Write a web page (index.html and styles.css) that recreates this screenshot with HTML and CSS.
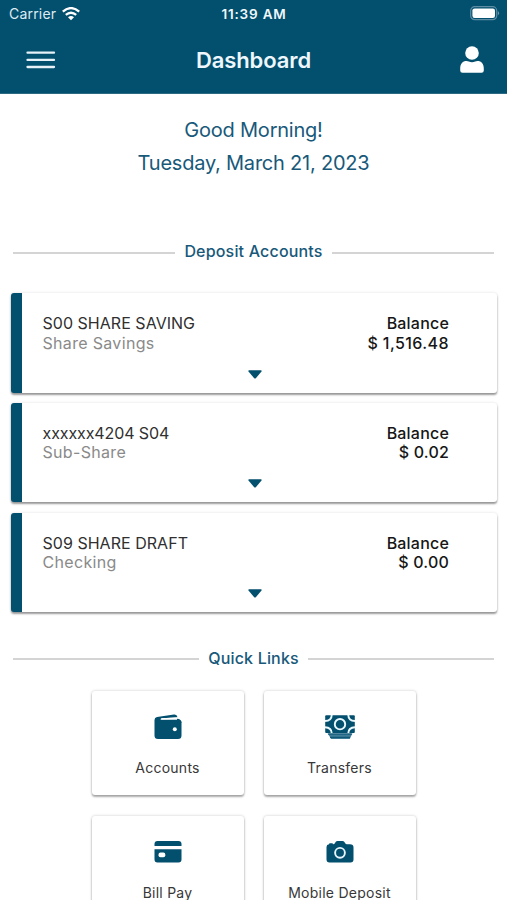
FILE: index.html
```html
<!DOCTYPE html>
<html lang="en">
<head>
<meta charset="utf-8">
<title>Dashboard</title>
<link rel="stylesheet" href="styles.css">
</head>
<body>
<header class="header">
  <div class="status">
    <div class="carrier"><span>Carrier</span>
      <svg class="wifi" viewBox="0 0 18 14"><g fill="none" stroke="#fff" stroke-width="2.300"><path d="M.8 4.600Q9-2.400 17.200 4.600"/><path d="M3.800 7.900Q9 3.500 14.200 7.900"/></g><path fill="#fff" d="M6 10.200Q9 7.900 12 10.200L9 13.300Z"/></svg>
    </div>
    <time class="clock">11:39 AM</time>
    <svg class="battery" viewBox="0 0 31 15"><rect x="1.700" y=".7" width="26" height="13" rx="4" fill="none" stroke="#5d8da4" stroke-width="1.200"/><rect x="3.400" y="2.400" width="22.600" height="9.600" rx="2.200" fill="#fff"/><path d="M28.900 5Q31.200 7.200 28.900 9.400Z" fill="#6f9bb0"/></svg>
  </div>
  <nav class="navbar">
    <svg class="menu" viewBox="0 0 30 20"><path d="M1.500 2.700H28M1.500 9.900H28M1.500 17H28" stroke="#e6f1f8" stroke-width="2.300" stroke-linecap="round"/></svg>
    <h1 class="title">Dashboard</h1>
    <svg class="user" viewBox="0 0 24 28"><circle cx="12" cy="7" r="6.800" fill="#fff"/><path fill="#fff" d="M.2 22.500C.2 17.500 2.800 15 6.500 15C8 15 9.500 16.200 12 16.200S16 15 17.500 15C21.200 15 23.800 17.500 23.800 22.500V24.500Q23.800 26.800 21.500 26.800H2.500Q.2 26.800.2 24.500Z"/></svg>
  </nav>
</header>
<main>
  <section class="greeting">
    <p class="hello">Good Morning!</p>
    <p class="date">Tuesday, March 21, 2023</p>
  </section>
  <h2 class="divider deposit"><span>Deposit Accounts</span></h2>
  <section class="accounts">
    <article class="account">
      <div class="row"><span class="name">S00 SHARE SAVING</span><span class="label">Balance</span></div>
      <div class="row"><span class="kind">Share Savings</span><span class="amount large">$ 1,516.48</span></div>
      <svg class="caret" viewBox="0 0 14 9"><path d="M1.200.3H12.800Q14.300.5 13.300 1.800L8 8Q7 9 6 8L.7 1.800Q-.3.5 1.200.3Z"/></svg>
    </article>
    <article class="account">
      <div class="row"><span class="name masked">xxxxxx4204 S04</span><span class="label">Balance</span></div>
      <div class="row"><span class="kind">Sub-Share</span><span class="amount">$ 0.02</span></div>
      <svg class="caret" viewBox="0 0 14 9"><path d="M1.200.3H12.800Q14.300.5 13.300 1.800L8 8Q7 9 6 8L.7 1.800Q-.3.5 1.200.3Z"/></svg>
    </article>
    <article class="account">
      <div class="row"><span class="name">S09 SHARE DRAFT</span><span class="label">Balance</span></div>
      <div class="row"><span class="kind">Checking</span><span class="amount">$ 0.00</span></div>
      <svg class="caret" viewBox="0 0 14 9"><path d="M1.200.3H12.800Q14.300.5 13.300 1.800L8 8Q7 9 6 8L.7 1.800Q-.3.5 1.200.3Z"/></svg>
    </article>
  </section>
  <h2 class="divider quick"><span>Quick Links</span></h2>
  <section class="links">
    <a class="tile">
      <svg class="icon" viewBox="0 0 30 26"><path d="M1.500 6Q1.500 3.700 4 3.100L21 .6Q24 .2 24.500 3.300L9 4.300Q7.500 4.500 7.500 5.200Q7.500 5.800 9 5.800H25Q28.500 5.800 28.500 9V21.500Q28.500 25 25 25H5Q1.500 25 1.500 21.500Z"/><path d="M8.500 4.900L24.800 4.100" stroke="#fff" stroke-width="1.200"/><path d="M24 4.700Q28.500 4.900 28.500 9H24Z"/><circle cx="21.800" cy="15.200" r="2" fill="#fff"/></svg>
      <span>Accounts</span>
    </a>
    <a class="tile">
      <svg class="icon" viewBox="0 0 30 26"><rect x=".2" y="1.300" width="29.600" height="17.700" rx="1"/><g fill="none" stroke="#eaf8ff" stroke-width="1.900"><circle cx="15" cy="10.200" r="5.200"/><path d="M6.700 1Q6.700 6.700 0 7M23.300 1Q23.300 6.700 30 7M0 13.200Q6.700 13.600 6.700 19.200M30 13.200Q23.300 13.600 23.300 19.200"/></g><path d="M2.500 19.500H27.500L26 22.300L24.800 25H6L4.500 22.300Z" fill="#3f7c98"/><path d="M3.200 20H26.800M5 23.300H25" stroke="#034f6e" stroke-width="1"/></svg>
      <span>Transfers</span>
    </a>
    <a class="tile">
      <svg class="icon" viewBox="0 0 30 26"><path d="M1.500 7V5Q1.500 2 4.500 2H25.500Q28.500 2 28.500 5V7ZM1.500 10.300H28.500V20.500Q28.500 23.500 25.500 23.500H4.500Q1.500 23.500 1.500 20.500Z"/><rect x="5.500" y="13.500" width="6.800" height="4.800" rx="2" fill="#fff"/></svg>
      <span>Bill Pay</span>
    </a>
    <a class="tile">
      <svg class="icon" viewBox="0 0 30 26"><path d="M1.500 8Q1.500 5.500 4 5.300L4.500 4.300H7.500L8 5.200Q9.500 5.200 10 4L10.800 2.800Q11.300 2 12.500 2H17.500Q18.700 2 19.200 2.800L20.200 4.200Q20.800 5.200 22 5.200H25Q28.500 5.200 28.500 8.500V20.500Q28.500 23.500 25.500 23.500H4.500Q1.500 23.500 1.500 20.500Z"/><circle cx="15" cy="13.800" r="4.900" fill="none" stroke="#e7f6ff" stroke-width="1.900"/></svg>
      <span>Mobile Deposit</span>
    </a>
  </section>
</main>
</body>
</html>
```
FILE: styles.css
```css
* { box-sizing: border-box; }
html, body { height: 100%; }
body { margin: 0; overflow: hidden; background: #fff; font-family: Inter, "Liberation Sans", sans-serif; color: #222; }
h1, h2, p { margin: 0; }
svg { display: block; flex: none; }
.header { height: 94px; background: #034f6e; border-bottom: 1px solid #2c6983; color: #fff; }
.status { height: 28px; padding: 0 7px 0 9px; display: grid; grid-template-columns: 1fr auto 1fr; align-items: center; }
.carrier { display: flex; gap: 6px; align-items: center; font-size: 14px; line-height: 17px; padding-bottom: 1px; letter-spacing: .2px; color: #dfebf3; }
.wifi { width: 18px; height: 14px; }
.clock { font-size: 13.500px; font-weight: 600; letter-spacing: .8px; margin-right: 1px; color: #f0f8fc; }
.battery { width: 31px; height: 15px; justify-self: end; margin-top: -1px; }
.navbar { height: 64px; padding: 0 23px 0 26px; display: grid; grid-template-columns: 1fr auto 1fr; align-items: center; }
.menu { width: 30px; height: 20px; }
.title { font-size: 22px; line-height: 28px; font-weight: 600; letter-spacing: -.1px; margin-right: 3px; color: #edf7fd; }
.user { width: 24px; height: 28px; justify-self: end; }
.greeting { padding-top: 20px; text-align: center; font-size: 20px; line-height: 33px; letter-spacing: -.22px; color: #18597a; }
.divider { display: flex; align-items: center; gap: 9px; padding: 0 13px; height: 24px; font-size: 16px; font-weight: 500; letter-spacing: .18px; color: #18597a; }
.divider::before, .divider::after { content: ""; flex: 1; height: 2px; background: #d4d4d4; margin-top: 3px; }
.deposit { margin-top: 59px; }
.accounts { display: flex; flex-direction: column; gap: 10.300px; padding: 30px 10px 0 11px; }
.account { height: 99.500px; border-left: 11px solid #034f6e; border-radius: 3px; padding: 21px 48px 0 20.500px; background: #fff; box-shadow: 0 2px 2px rgba(0,0,0,.38), 0 0 3px rgba(0,0,0,.12); }
.row { display: flex; justify-content: space-between; font-size: 16px; line-height: 19.500px; }
.name { color: #303030; letter-spacing: .03px; }
.masked { letter-spacing: -.1px; }
.kind { color: #8a8a8a; letter-spacing: .32px; }
.label, .amount { font-weight: 500; color: #161616; letter-spacing: .2px; }
.large { letter-spacing: .42px; }
.caret { width: 14px; height: 9px; margin: 16.500px 0 0 205px; fill: #034f6e; }
.quick { margin-top: 33.900px; }
.links { display: grid; grid-template-columns: 152px 152px; gap: 20.500px 20px; justify-content: center; padding-top: 21px; }
.tile { height: 104.500px; border-radius: 3px; background: #fff; box-shadow: 0 2px 2px rgba(0,0,0,.3), 0 0 3px rgba(0,0,0,.22); display: flex; flex-direction: column; align-items: center; padding-top: 23px; font-size: 14px; line-height: 20px; letter-spacing: .25px; color: #383838; gap: 18px; }
.icon { width: 30px; height: 26px; fill: #034f6e; }
```
